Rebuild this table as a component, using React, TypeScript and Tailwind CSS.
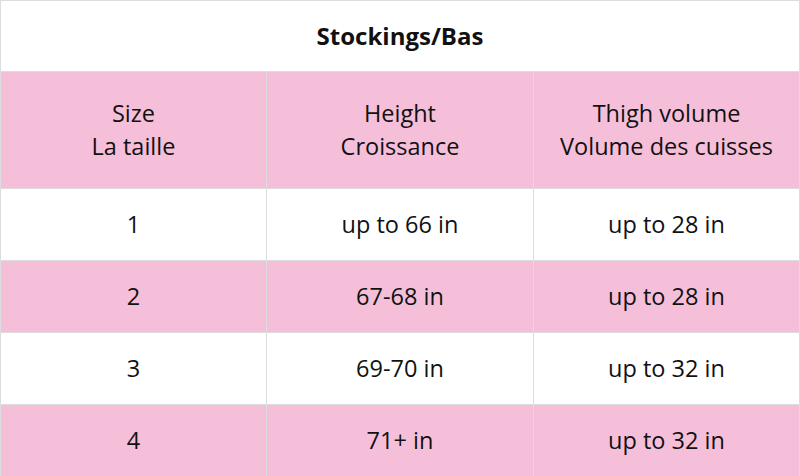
const rows = [
  { size: "1", height: "up to 66 in", thigh: "up to 28 in", pink: false },
  { size: "2", height: "67-68 in", thigh: "up to 28 in", pink: true },
  { size: "3", height: "69-70 in", thigh: "up to 32 in", pink: false },
  { size: "4", height: "71+ in", thigh: "up to 32 in", pink: true },
];

function Cell({ children, w }: { children: React.ReactNode; w: string }) {
  return (
    <div className={`${w} flex flex-col items-center justify-center border-r border-[#dddddd] text-center`}>
      {children}
    </div>
  );
}

export default function App() {
  return (
    <div
      className="w-[800px] h-[476px] overflow-hidden bg-white text-[23.5px] text-[#111111]"
      style={{ fontFamily: '"Open Sans", "Noto Sans", sans-serif' }}
    >
      <div className="flex flex-col border-t border-l border-[#dddddd]">
        {/* title */}
        <div className="flex h-[71px] items-center justify-center border-r border-b border-[#dddddd] text-[24px] font-bold">
          Stockings/Bas
        </div>

        {/* header */}
        <div className="flex h-[117px] border-b border-[#dddddd] bg-[#f6bfd9] leading-[33px]">
          <Cell w="w-[266px]">
            <span>Size</span>
            <span>La taille</span>
          </Cell>
          <Cell w="w-[267px]">
            <span>Height</span>
            <span>Croissance</span>
          </Cell>
          <Cell w="w-[266px]">
            <span>Thigh volume</span>
            <span>Volume des cuisses</span>
          </Cell>
        </div>

        {rows.map((r) => (
          <div
            key={r.size}
            className={`flex h-[72px] border-b border-[#dddddd] ${r.pink ? "bg-[#f6bfd9]" : "bg-white"}`}
          >
            <Cell w="w-[266px]">{r.size}</Cell>
            <Cell w="w-[267px]">{r.height}</Cell>
            <Cell w="w-[266px]">{r.thigh}</Cell>
          </div>
        ))}
      </div>
    </div>
  );
}
